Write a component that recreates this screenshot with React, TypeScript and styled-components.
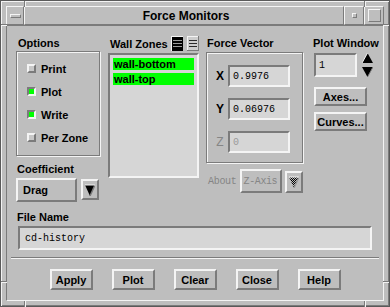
import React from "react";
import styled, { createGlobalStyle, css } from "styled-components";

const BG = "#bebebe";
const FIELD = "#d6d6d6";
const LIGHT = "#f4f4f4";
const DARK = "#7b7b7b";
const DIM = "#858585";
const GREEN = "#00ff00";

const GlobalStyle = createGlobalStyle`
  html, body { margin: 0; padding: 0; background: ${BG}; }
  body { font-family: "Liberation Sans", Arial, sans-serif; color: #000; }
  * { box-sizing: border-box; }
`;

const raised = (w = 2) => css`
  border: ${w}px solid;
  border-color: ${LIGHT} ${DARK} ${DARK} ${LIGHT};
`;

const sunken = (w = 2) => css`
  border: ${w}px solid;
  border-color: ${DARK} ${LIGHT} ${LIGHT} ${DARK};
`;

const etched = css`
  border: 1px solid ${DARK};
  box-shadow: inset 1px 1px 0 ${LIGHT}, 1px 1px 0 ${LIGHT};
`;

const labelFont = css`
  font-family: "Liberation Sans", Arial, sans-serif;
  font-weight: bold;
  font-size: 11px;
`;

const monoFont = css`
  font-family: "Liberation Mono", "Courier New", monospace;
  font-size: 10px;
`;

/* ===== window frame ===== */
const Window = styled.div`
  position: relative;
  width: 390px;
  height: 307px;
  background: ${BG};
  border: 1px solid #5a5a5a;
  box-shadow: inset 1px 1px 0 ${LIGHT}, inset -1px -1px 0 ${DARK};
  padding: 5px;
  display: flex;
  flex-direction: column;
`;

const Notch = styled.div<{ $v?: boolean }>`
  position: absolute;
  ${(p) =>
    p.$v
      ? css`width: 2px; height: 6px; border-left: 1px solid ${DARK}; border-right: 1px solid ${LIGHT};`
      : css`width: 6px; height: 2px; border-top: 1px solid ${DARK}; border-bottom: 1px solid ${LIGHT};`}
`;

const TitleBar = styled.div`
  display: flex;
  height: 19px;
  flex-shrink: 0;
`;

const TitleButton = styled.div<{ $w: number }>`
  ${raised(1)};
  width: ${(p) => p.$w}px;
  display: flex;
  align-items: center;
  justify-content: center;
`;

const MenuBar = styled.div`
  width: 11px;
  height: 4px;
  ${raised(1)};
`;

const MinSquare = styled.div`
  width: 5px;
  height: 5px;
  ${raised(1)};
`;

const MaxSquare = styled.div`
  width: 13px;
  height: 13px;
  ${raised(1)};
`;

const Title = styled.div`
  ${raised(1)};
  flex: 1;
  display: flex;
  align-items: center;
  justify-content: center;
  font-family: "Liberation Sans", Arial, sans-serif;
  font-weight: bold;
  font-size: 12px;
  padding-left: 4px;
`;

const Body = styled.div`
  flex: 1;
  border: 1px solid;
  border-color: ${DARK} ${LIGHT} ${LIGHT} ${DARK};
  display: flex;
  flex-direction: column;
`;

/* ===== main panel ===== */
const Main = styled.div`
  padding: 10px 0 0 9px;
`;

const TopRow = styled.div`
  display: flex;
  align-items: flex-start;
`;

const Column = styled.div<{ $w: number; $ml?: number }>`
  width: ${(p) => p.$w}px;
  margin-left: ${(p) => p.$ml ?? 0}px;
  display: flex;
  flex-direction: column;
`;

const Label = styled.div<{ $mt?: number; $ml?: number }>`
  ${labelFont};
  height: 14px;
  line-height: 14px;
  margin-top: ${(p) => p.$mt ?? 0}px;
  margin-left: ${(p) => p.$ml ?? 0}px;
  white-space: nowrap;
`;

const Frame = styled.div<{ $h: number; $mt: number; $pt: number }>`
  ${etched};
  height: ${(p) => p.$h}px;
  margin-top: ${(p) => p.$mt}px;
  padding-top: ${(p) => p.$pt}px;
  display: flex;
  flex-direction: column;
`;

const ToggleRow = styled.div`
  ${labelFont};
  height: 23px;
  display: flex;
  align-items: center;
  padding-left: 10px;
  gap: 5px;
`;

const Indicator = styled.div<{ $on: boolean }>`
  width: 9px;
  height: 9px;
  ${(p) => (p.$on ? sunken(2) : raised(2))};
  background: ${(p) => (p.$on ? GREEN : "#c8c8c8")};
`;

const OptionRow = styled.div`
  display: flex;
  align-items: flex-start;
  margin-top: 2px;
  height: 24px;
`;

const OptionMenu = styled.div<{ $w: number; $disabled?: boolean }>`
  ${raised(2)};
  width: ${(p) => p.$w}px;
  height: 24px;
  display: flex;
  align-items: center;
  white-space: nowrap;
  overflow: hidden;
  padding-left: ${(p) => (p.$disabled ? 2 : 5)}px;
  ${(p) =>
    p.$disabled
      ? css`${monoFont}; font-size: 10px; letter-spacing: -0.4px; color: ${DIM};`
      : css`${labelFont};`}
`;

const ArrowButton = styled.div<{ $ml: number; $mt: number; $h: number }>`
  ${raised(2)};
  width: 18px;
  height: ${(p) => p.$h}px;
  margin-left: ${(p) => p.$ml}px;
  margin-top: ${(p) => p.$mt}px;
  display: flex;
  align-items: center;
  justify-content: center;
`;

const ListHeader = styled.div`
  display: flex;
  align-items: center;
  height: 15px;
  padding-left: 2px;
`;

const HeaderIcons = styled.div`
  margin-left: auto;
  display: flex;
  gap: 4px;
`;

const List = styled.div`
  ${sunken(2)};
  background: ${FIELD};
  margin-top: 2px;
  height: 125px;
  padding: 3px 3px 0 3px;
  display: flex;
  flex-direction: column;
  gap: 3px;
`;

const ListItem = styled.div`
  ${labelFont};
  background: ${GREEN};
  height: 12px;
  line-height: 12px;
  padding-left: 1px;
`;

const VectorRow = styled.div`
  display: flex;
  align-items: center;
  height: 22px;
  padding-left: 9px;
  margin-bottom: 11px;
`;

const AxisLetter = styled.div<{ $disabled?: boolean }>`
  ${labelFont};
  font-size: 12px;
  width: 8px;
  margin-right: 4px;
  text-align: center;
  color: ${(p) => (p.$disabled ? DIM : "#000")};
  font-weight: ${(p) => (p.$disabled ? "normal" : "bold")};
`;

const TextField = styled.div<{ $w?: number; $h: number; $disabled?: boolean }>`
  ${sunken(2)};
  ${monoFont};
  background: ${FIELD};
  width: ${(p) => (p.$w ? `${p.$w}px` : "auto")};
  height: ${(p) => p.$h}px;
  display: flex;
  align-items: center;
  padding-left: 3px;
  color: ${(p) => (p.$disabled ? "#9a9a9a" : "#000")};
`;

const AboutRow = styled.div`
  display: flex;
  align-items: flex-start;
  margin-top: 6px;
  height: 25px;
  padding-left: 2px;
`;

const DimText = styled.div`
  ${monoFont};
  font-size: 10px;
  letter-spacing: -0.3px;
  color: ${DIM};
  line-height: 25px;
  width: 32px;
`;

const SpinRow = styled.div`
  display: flex;
  align-items: flex-start;
  margin: 3px 0 0 1px;
  gap: 5px;
`;

const Arrows = styled.div`
  display: flex;
  flex-direction: column;
  gap: 4px;
`;

const SideButton = styled.div<{ $mt: number }>`
  ${raised(2)};
  ${labelFont};
  width: 53px;
  height: 19px;
  margin: ${(p) => p.$mt}px 0 0 1px;
  display: flex;
  align-items: center;
  justify-content: center;
`;

const FileField = styled(TextField)`
  margin: 2px 0 0 2px;
  width: 354px;
  padding-left: 5px;
`;

/* ===== footer ===== */
const Footer = styled.div`
  margin-top: 7px;
  padding: 0 4px;
`;

const Separator = styled.div`
  height: 2px;
  border-top: 1px solid ${DARK};
  border-bottom: 1px solid ${LIGHT};
`;

const ButtonRow = styled.div`
  display: flex;
  justify-content: center;
  gap: 19px;
  margin-top: 10px;
`;

const PushButton = styled.div`
  ${raised(2)};
  ${labelFont};
  width: 43px;
  height: 21px;
  display: flex;
  align-items: center;
  justify-content: center;
`;

/* ===== drawings ===== */
const DownTriangle = ({ dim }: { dim?: boolean }) => (
  <svg width="10" height="12" viewBox="0 0 10 12">
    <defs>
      <pattern id="stip" width="2" height="2" patternUnits="userSpaceOnUse">
        <rect width="1" height="1" fill="#000" />
        <rect x="1" y="1" width="1" height="1" fill="#000" />
      </pattern>
    </defs>
    <polygon points="0,1 10,1 5,12" fill={dim ? "url(#stip)" : "#000"} />
    <polyline points="10,1 5,12" stroke={dim ? "#9a9a9a" : DARK} strokeWidth="1.5" fill="none" />
    <polyline points="0,1 10,1" stroke={LIGHT} strokeWidth="1" fill="none" />
  </svg>
);

const SpinArrow = ({ up }: { up?: boolean }) => (
  <svg width="11" height="10" viewBox="0 0 11 10">
    {up ? (
      <>
        <polygon points="5.5,0 11,10 0,10" fill="#000" />
        <polyline points="5.5,0 0,10" stroke={LIGHT} strokeWidth="1" fill="none" />
      </>
    ) : (
      <>
        <polygon points="0,0 11,0 5.5,10" fill="#000" />
        <polyline points="11,0 5.5,10" stroke={DARK} strokeWidth="1" fill="none" />
      </>
    )}
  </svg>
);

const SelectAllIcon = () => (
  <svg width="12" height="15" viewBox="0 0 12 15">
    <rect x="0" y="0" width="12" height="15" fill="#000" />
    <rect x="0" y="0" width="12" height="1" fill={LIGHT} />
    <rect x="0" y="0" width="1" height="15" fill={LIGHT} />
    {[4, 7, 10].map((y) => (
      <rect key={y} x="2" y={y} width="9" height="1" fill="#9a9a9a" />
    ))}
  </svg>
);

const SelectNoneIcon = () => (
  <svg width="12" height="15" viewBox="0 0 12 15">
    <rect x="0" y="0" width="12" height="15" fill="#cdcdcd" />
    <rect x="0" y="0" width="12" height="1" fill={LIGHT} />
    <rect x="0" y="0" width="1" height="15" fill={LIGHT} />
    <rect x="11" y="0" width="1" height="15" fill={DARK} />
    <rect x="0" y="14" width="12" height="1" fill={DARK} />
    {[4, 7, 10].map((y) => (
      <rect key={y} x="2" y={y} width="8" height="1" fill="#2a2a2a" />
    ))}
  </svg>
);

const options = [
  { name: "Print", on: false },
  { name: "Plot", on: true },
  { name: "Write", on: true },
  { name: "Per Zone", on: false },
];

const vector = [
  { axis: "X", value: "0.9976" },
  { axis: "Y", value: "0.06976" },
  { axis: "Z", value: "0", disabled: true },
];

const zones = ["wall-bottom", "wall-top"];
const actions = ["Apply", "Plot", "Clear", "Close", "Help"];

const notches = [
  { v: true, style: { left: 23, top: 0 } },
  { v: true, style: { left: 363, top: 0 } },
  { v: true, style: { left: 23, top: 300 } },
  { v: true, style: { left: 363, top: 300 } },
  { v: false, style: { left: 0, top: 23 } },
  { v: false, style: { left: 382, top: 23 } },
  { v: false, style: { left: 0, top: 280 } },
  { v: false, style: { left: 382, top: 280 } },
];

export default function App() {
  return (
    <>
      <GlobalStyle />
      <Window>
        {notches.map((n, i) => (
          <Notch key={i} $v={n.v} style={n.style} />
        ))}
        <TitleBar>
          <TitleButton $w={18}>
            <MenuBar />
          </TitleButton>
          <Title>Force Monitors</Title>
          <TitleButton $w={20}>
            <MinSquare />
          </TitleButton>
          <TitleButton $w={20}>
            <MaxSquare />
          </TitleButton>
        </TitleBar>

        <Body>
          <Main>
            <TopRow>
              <Column $w={84}>
                <Label $ml={2}>Options</Label>
                <Frame $h={105} $mt={1} $pt={5}>
                  {options.map((o) => (
                    <ToggleRow key={o.name}>
                      <Indicator $on={o.on} />
                      {o.name}
                    </ToggleRow>
                  ))}
                </Frame>
                <Label $mt={6} $ml={1}>Coefficient</Label>
                <OptionRow>
                  <OptionMenu $w={61}>Drag</OptionMenu>
                  <ArrowButton $ml={4} $mt={1} $h={21}>
                    <DownTriangle />
                  </ArrowButton>
                </OptionRow>
              </Column>

              <Column $w={91} $ml={8}>
                <ListHeader>
                  <Label>Wall Zones</Label>
                  <HeaderIcons>
                    <SelectAllIcon />
                    <SelectNoneIcon />
                  </HeaderIcons>
                </ListHeader>
                <List>
                  {zones.map((z) => (
                    <ListItem key={z}>{z}</ListItem>
                  ))}
                </List>
              </Column>

              <Column $w={97} $ml={7}>
                <Label $ml={1}>Force Vector</Label>
                <Frame $h={111} $mt={2} $pt={12}>
                  {vector.map((v) => (
                    <VectorRow key={v.axis}>
                      <AxisLetter $disabled={v.disabled}>{v.axis}</AxisLetter>
                      <TextField $w={62} $h={22} $disabled={v.disabled}>
                        {v.value}
                      </TextField>
                    </VectorRow>
                  ))}
                </Frame>
                <AboutRow>
                  <DimText>About</DimText>
                  <OptionMenu $w={43} $disabled>
                    Z-Axis
                  </OptionMenu>
                  <ArrowButton $ml={3} $mt={2} $h={22}>
                    <DownTriangle dim />
                  </ArrowButton>
                </AboutRow>
              </Column>

              <Column $w={62} $ml={10}>
                <Label>Plot Window</Label>
                <SpinRow>
                  <TextField $w={43} $h={24}>
                    1
                  </TextField>
                  <Arrows>
                    <SpinArrow up />
                    <SpinArrow />
                  </Arrows>
                </SpinRow>
                <SideButton $mt={10}>Axes...</SideButton>
                <SideButton $mt={6}>Curves...</SideButton>
              </Column>
            </TopRow>

            <Label $mt={8} $ml={1}>File Name</Label>
            <FileField $h={24}>cd-history</FileField>
          </Main>

          <Footer>
            <Separator />
            <ButtonRow>
              {actions.map((a) => (
                <PushButton key={a}>{a}</PushButton>
              ))}
            </ButtonRow>
          </Footer>
        </Body>
      </Window>
    </>
  );
}
